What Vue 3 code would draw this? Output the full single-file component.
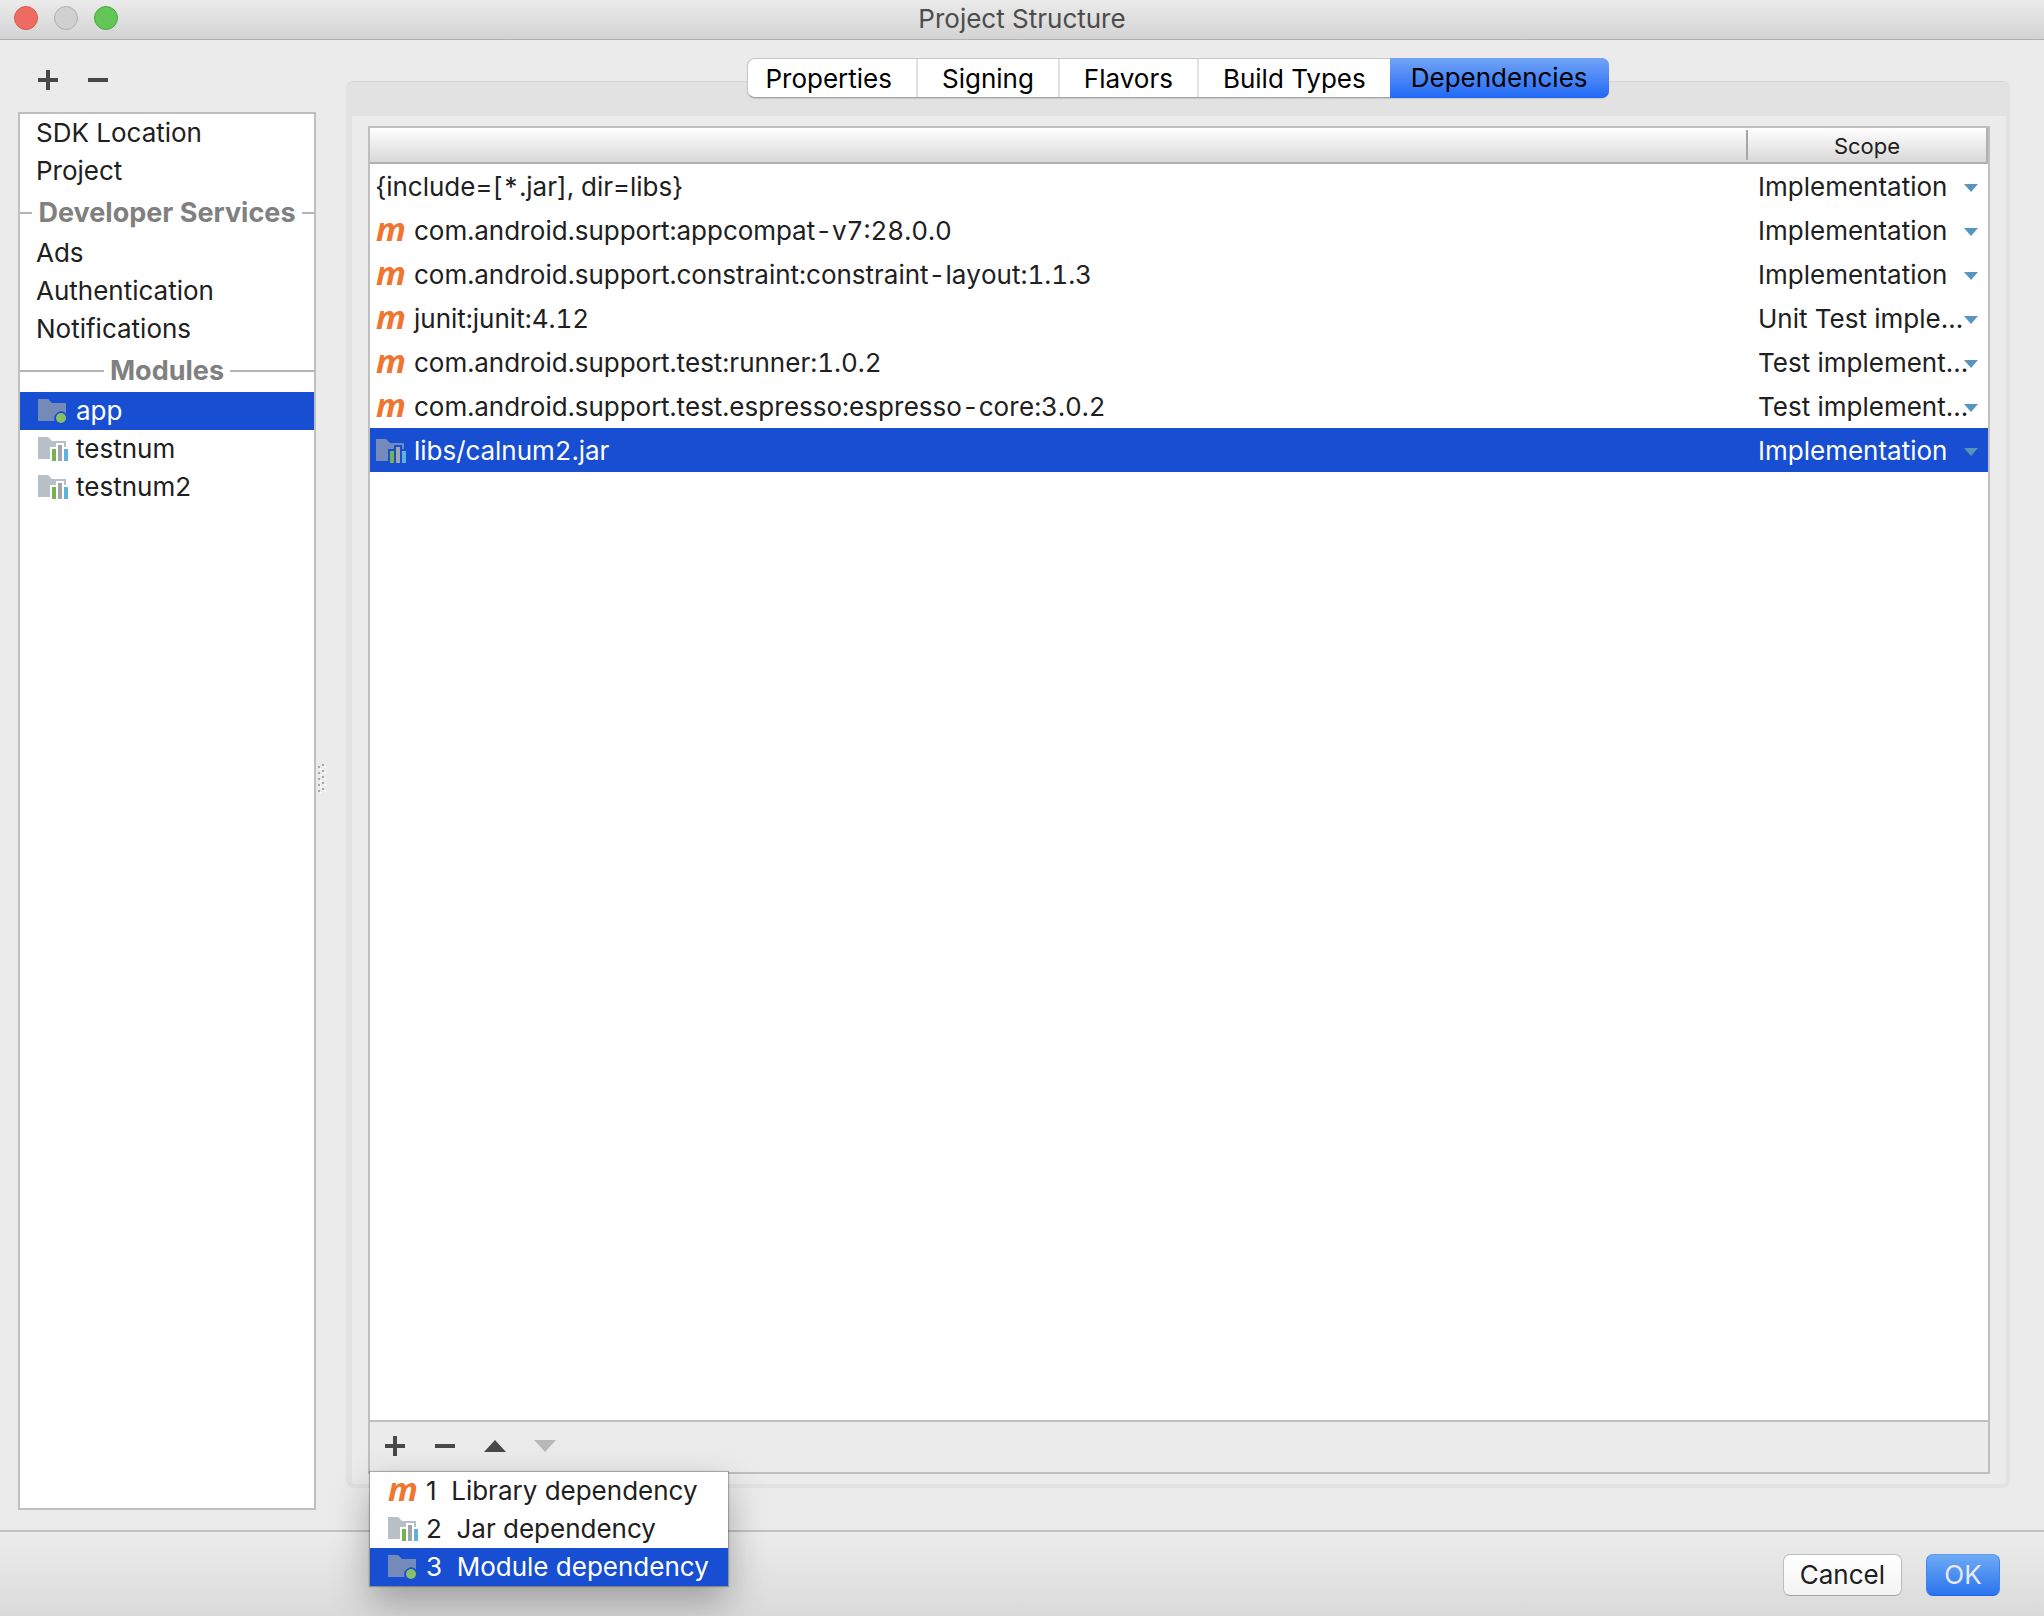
<script setup>
import { ref } from 'vue'

const sections = [
  { title: '', items: [{ name: 'SDK Location' }, { name: 'Project' }] },
  {
    title: 'Developer Services',
    items: [{ name: 'Ads' }, { name: 'Authentication' }, { name: 'Notifications' }]
  },
  {
    title: 'Modules',
    items: [
      { name: 'app', icon: 'module' },
      { name: 'testnum', icon: 'library' },
      { name: 'testnum2', icon: 'library' }
    ]
  }
]
const selectedItem = ref('app')

const tabs = ['Properties', 'Signing', 'Flavors', 'Build Types', 'Dependencies']
const activeTab = ref('Dependencies')

const dependencies = ref([
  { name: '{include=[*.jar], dir=libs}', scope: 'Implementation' },
  { name: 'com.android.support:appcompat-v7:28.0.0', icon: 'maven', scope: 'Implementation' },
  { name: 'com.android.support.constraint:constraint-layout:1.1.3', icon: 'maven', scope: 'Implementation' },
  { name: 'junit:junit:4.12', icon: 'maven', scope: 'Unit Test imple...' },
  { name: 'com.android.support.test:runner:1.0.2', icon: 'maven', scope: 'Test implement...' },
  { name: 'com.android.support.test.espresso:espresso-core:3.0.2', icon: 'maven', scope: 'Test implement...' },
  { name: 'libs/calnum2.jar', icon: 'library', scope: 'Implementation' }
])
const scopes = ['Implementation', 'Unit Test imple...', 'Test implement...']
const selectedDependency = ref('libs/calnum2.jar')

const menuItems = [
  { key: 1, label: 'Library dependency', icon: 'maven' },
  { key: 2, label: 'Jar dependency', icon: 'library' },
  { key: 3, label: 'Module dependency', icon: 'module' }
]
const activeMenuItem = ref(3)
</script>

<template>
  <div class="window">
    <svg class="symbols" aria-hidden="true">
      <symbol id="icon-module" viewBox="0 0 30 24">
        <path class="folder" d="M0 0H9Q11 0 12 2L14 4H28V14.4A7 7 0 0 0 16.7 22H0Z" />
        <circle cx="23" cy="19" r="5" fill="#8abf68" />
      </symbol>
      <symbol id="icon-library" viewBox="0 0 30 24">
        <path class="folder" d="M0 0H9Q11 0 12 2L14 4H28V10H26V6H18V10H12V22H0Z" />
        <path fill="#76b250" d="M14 12h4v12h-4z" />
        <path fill="#a0a6ac" d="M20 8h4v16h-4z" />
        <path fill="#60b2de" d="M26 12h4v12h-4z" />
      </symbol>
    </svg>

    <header class="titlebar">
      <div class="lights">
        <button class="light close" aria-label="Close"></button>
        <button class="light minimize" aria-label="Minimize" disabled></button>
        <button class="light zoom" aria-label="Zoom"></button>
      </div>
      <h1>Project Structure</h1>
    </header>

    <div class="body">
      <aside class="sidebar">
        <div class="tools">
          <button class="tool" aria-label="Add module">
            <svg width="20" height="20"><path d="M8 0h4v8h8v4h-8v8H8v-8H0V8h8z" /></svg>
          </button>
          <button class="tool" aria-label="Remove module">
            <svg width="20" height="20"><path d="M0 8h20v4H0z" /></svg>
          </button>
        </div>
        <nav class="list">
          <section v-for="section in sections" :key="section.title">
            <h2 v-if="section.title">{{ section.title }}</h2>
            <button
              v-for="item in section.items"
              :key="item.name"
              class="item"
              :class="{ selected: item.name === selectedItem }"
              @click="selectedItem = item.name"
            >
              <svg v-if="item.icon" class="icon"><use :href="'#icon-' + item.icon" /></svg>
              <span>{{ item.name }}</span>
            </button>
          </section>
        </nav>
      </aside>

      <div class="splitter">
        <svg width="10" height="32" aria-hidden="true">
          <g v-for="n in 5" :key="n">
            <path fill="#a9a9a9" :d="`M0 ${n * 6 - 4}h2v2h-2zM4 ${n * 6 - 6}h2v2h-2z`" />
            <path fill="#fafafa" :d="`M2 ${n * 6 - 2}h2v2h-2zM6 ${n * 6 - 4}h2v2h-2z`" />
          </g>
        </svg>
      </div>

      <main class="content">
        <div class="tabs" role="tablist">
          <button
            v-for="tab in tabs"
            :key="tab"
            class="tab"
            role="tab"
            :class="{ active: tab === activeTab }"
            :aria-selected="tab === activeTab"
            @click="activeTab = tab"
          >{{ tab }}</button>
        </div>

        <div class="panel">
          <div class="frame">
            <div class="table-area">
              <table>
                <colgroup>
                  <col />
                  <col class="scope-col" />
                </colgroup>
                <thead>
                  <tr>
                    <th></th>
                    <th class="scope-head">Scope</th>
                  </tr>
                </thead>
                <tbody>
                  <tr
                    v-for="dep in dependencies"
                    :key="dep.name"
                    :class="{ selected: dep.name === selectedDependency }"
                    @click="selectedDependency = dep.name"
                  >
                    <td>
                      <div class="dep">
                        <i v-if="dep.icon === 'maven'" class="maven" aria-hidden="true">m</i>
                        <svg v-else-if="dep.icon" class="icon"><use :href="'#icon-' + dep.icon" /></svg>
                        <span>{{ dep.name }}</span>
                      </div>
                    </td>
                    <td>
                      <div class="scope">
                        <select v-model="dep.scope" :aria-label="'Scope of ' + dep.name">
                          <option v-for="scope in scopes" :key="scope">{{ scope }}</option>
                        </select>
                        <svg class="caret" width="14" height="8"><path d="M0 0h14L7 8z" /></svg>
                      </div>
                    </td>
                  </tr>
                </tbody>
              </table>
            </div>

            <div class="table-tools">
              <button class="tool" aria-label="Add dependency">
                <svg width="20" height="20"><path d="M8 0h4v8h8v4h-8v8H8v-8H0V8h8z" /></svg>
              </button>
              <button class="tool" aria-label="Remove dependency">
                <svg width="20" height="20"><path d="M0 8h20v4H0z" /></svg>
              </button>
              <button class="tool" aria-label="Move up">
                <svg width="22" height="20"><path d="M11 4l11 12H0z" /></svg>
              </button>
              <button class="tool" aria-label="Move down" disabled>
                <svg width="22" height="20"><path d="M0 4h22L11 16z" /></svg>
              </button>

              <div class="menu" role="menu">
                <button
                  v-for="entry in menuItems"
                  :key="entry.key"
                  class="menu-item"
                  role="menuitem"
                  :class="{ selected: entry.key === activeMenuItem }"
                  @mouseenter="activeMenuItem = entry.key"
                >
                  <i v-if="entry.icon === 'maven'" class="maven" aria-hidden="true">m</i>
                  <svg v-else class="icon"><use :href="'#icon-' + entry.icon" /></svg>
                  <span class="menu-label">{{ entry.key + '  ' + entry.label }}</span>
                </button>
              </div>
            </div>
          </div>
        </div>
      </main>
    </div>

    <footer class="footer">
      <button class="action">Cancel</button>
      <button class="action primary">OK</button>
    </footer>
  </div>
</template>

<style>
body {
  margin: 0;
}
</style>

<style scoped>
.window {
  display: flex;
  flex-direction: column;
  box-sizing: border-box;
  min-height: 100vh;
  overflow: hidden;
  background: #ebebeb;
  color: #202020;
  font: 26px/38px Inter, "Liberation Sans", sans-serif;
}
.window *,
.window *::before,
.window *::after {
  box-sizing: border-box;
}
button,
select {
  margin: 0;
  padding: 0;
  border: 0;
  background: none;
  color: inherit;
  font: inherit;
  text-align: left;
  appearance: none;
  outline: none;
}
.symbols {
  position: absolute;
  width: 0;
  height: 0;
}

.titlebar {
  display: grid;
  grid-template-columns: 1fr auto 1fr;
  height: 40px;
  padding: 0 14px;
  border-bottom: 1px solid #b0b0b0;
  background: linear-gradient(#ebebeb, #d3d3d3);
}
.titlebar h1 {
  margin: 0;
  color: #4c4c4c;
  font-size: 26px;
  font-weight: 400;
}
.lights {
  display: flex;
  gap: 16px;
  padding-top: 6px;
}
.light {
  width: 24px;
  height: 24px;
  border: 1px solid;
  border-radius: 50%;
}
.close {
  border-color: #d9594e;
  background: #ed6b60;
}
.minimize {
  border-color: #b0b0b0;
  background: #d0d0d0;
}
.zoom {
  border-color: #4caa3d;
  background: #62c656;
}

.body {
  display: flex;
  flex: 1;
}
.sidebar {
  display: flex;
  flex-direction: column;
  width: 298px;
  margin: 0 0 20px 18px;
}
.tools {
  display: flex;
  height: 72px;
  padding: 25px 0 0 5px;
}
.tool {
  display: flex;
  align-items: center;
  justify-content: center;
  width: 50px;
  height: 30px;
}
.tool path {
  fill: #484848;
}
.tool:disabled path {
  fill: #b8b8b8;
}
.list {
  flex: 1;
  border: 2px solid #bfbfbf;
  background: #fff;
}
.list h2 {
  display: flex;
  align-items: center;
  gap: 6px;
  height: 44px;
  margin: 0;
  padding-top: 2px;
  color: #808080;
  font-size: 27px;
  font-weight: 700;
  white-space: nowrap;
}
.list h2::before,
.list h2::after {
  content: "";
  flex: 1;
  height: 2px;
  background: #b4b4b4;
}
.item {
  display: flex;
  align-items: center;
  gap: 8px;
  width: 100%;
  height: 38px;
  padding-left: 16px;
}
.item .icon {
  margin-left: 2px;
}
.icon {
  flex: none;
  width: 30px;
  height: 24px;
  fill: #b7c0c7;
}
.selected {
  background: #174ed2;
  color: #fff;
}
.selected .icon {
  fill: #748bb9;
}

.splitter {
  display: flex;
  align-items: center;
  width: 30px;
  padding: 0 0 10px 2px;
}

.content {
  display: flex;
  flex: 1;
  flex-direction: column;
  min-width: 0;
  padding: 18px 34px 42px 0;
}
.tabs {
  z-index: 1;
  display: flex;
  align-self: center;
  margin-bottom: -16px;
  border: 1px solid #c6c6c6;
  border-bottom-color: #a4a4a4;
  border-radius: 8px;
  background: #fff;
  box-shadow: 0 1px 1px rgba(0, 0, 0, 0.12);
  color: #000;
}
.tab {
  height: 38px;
  padding: 0 24px;
  border-right: 2px solid #e2e2e2;
  line-height: 40px;
  text-align: center;
}
.tab:first-child {
  padding-left: 17px;
}
.tab:nth-last-child(2) {
  border-right: 0;
}
.tab:last-child {
  height: 40px;
  margin: -1px -1px -1px 0;
  padding: 0 21px;
  border-right: 0;
  border-radius: 0 7px 7px 0;
}
.tab.active {
  background: linear-gradient(#72a4f7, #2169f5);
}
.panel {
  display: flex;
  flex: 1;
  padding: 10px 16px;
  border: 4px solid #e2e2e2;
  border-top-width: 34px;
  border-left-width: 6px;
  border-radius: 8px;
  box-shadow: 0 -1px #d4d4d4;
}
.frame {
  display: flex;
  flex: 1;
  flex-direction: column;
  min-width: 0;
  border: 2px solid #bfbfbf;
}
.table-area {
  flex: 1;
  background: #fff;
}
table {
  width: 100%;
  border-collapse: collapse;
  table-layout: fixed;
}
.scope-col {
  width: 242px;
}
th,
td {
  padding: 0;
}
thead tr {
  height: 36px;
  background: linear-gradient(#fff, #d6d6d6);
  box-shadow: inset 0 -2px #b0b0b0, inset -2px 0 #b0b0b0;
}
.scope-head {
  background: linear-gradient(#a6a6a6, #a6a6a6) 0 2px / 2px 30px no-repeat;
  font-size: 22px;
  font-weight: 400;
  line-height: 34px;
}
tbody tr {
  height: 44px;
}
.dep {
  display: flex;
  align-items: center;
  gap: 8px;
  height: 44px;
  padding: 2px 0 0 6px;
  font-kerning: none;
  font-variant-numeric: tabular-nums;
  white-space: nowrap;
}
.maven {
  flex: none;
  width: 30px;
  height: 38px;
  color: #f0752f;
  font: italic 700 33px/34px "Noto Sans", sans-serif;
}
.scope {
  position: relative;
  height: 44px;
}
.scope select {
  width: 100%;
  height: 44px;
  padding: 2px 0 0 12px;
}
.caret {
  position: absolute;
  top: 20px;
  right: 10px;
  fill: #5794bf;
  pointer-events: none;
}
.selected .caret {
  fill: #5b92b8;
}
option {
  color: #202020;
}
.table-tools {
  position: relative;
  display: flex;
  align-items: center;
  height: 52px;
  padding-bottom: 2px;
  border-top: 2px solid #bfbfbf;
}
.menu {
  position: absolute;
  top: 50px;
  left: 0;
  width: 358px;
  background: #fff;
  box-shadow: 0 0 1px 1px rgba(0, 0, 0, 0.25), 0 16px 36px rgba(0, 0, 0, 0.3);
}
.menu-item {
  display: flex;
  align-items: center;
  gap: 8px;
  width: 100%;
  height: 38px;
  padding-left: 18px;
}
.menu-label {
  white-space: pre;
}

.footer {
  display: flex;
  justify-content: flex-end;
  gap: 24px;
  height: 86px;
  padding: 22px 44px 0;
  border-top: 2px solid #c2c2c2;
  background: linear-gradient(#ececec, #dadada);
}
.action {
  min-width: 74px;
  height: 42px;
  padding: 0 16px;
  border: 1px solid #bcbcbc;
  border-bottom-color: #a4a4a4;
  border-radius: 7px;
  background: linear-gradient(#fff, #f3f3f3);
  text-align: center;
}
.primary {
  border-color: #5a9bf0 #3f83ee #1d60e8;
  background: linear-gradient(#6eaaf5, #2a74ee);
  color: #e8eaf0;
}
</style>
